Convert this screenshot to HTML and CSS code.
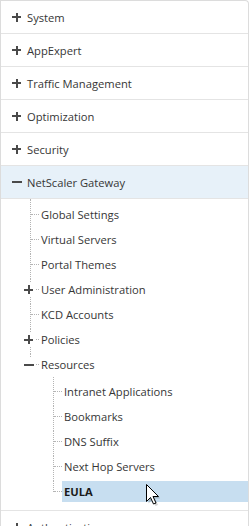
FILE: index.html
```html
<!DOCTYPE html>
<html>
<head>
<meta charset="utf-8">
<link rel="stylesheet" href="styles.css">
</head>
<body>
<div class="tree">
  <ul class="root">
    <li class="node"><div class="head"><span class="ico plus"></span><span>System</span></div></li>
    <li class="node"><div class="head"><span class="ico plus"></span><span>AppExpert</span></div></li>
    <li class="node"><div class="head"><span class="ico plus"></span><span>Traffic Management</span></div></li>
    <li class="node"><div class="head"><span class="ico plus"></span><span>Optimization</span></div></li>
    <li class="node"><div class="head"><span class="ico plus"></span><span>Security</span></div></li>
    <li class="node open">
      <div class="head active"><span class="ico minus"></span><span>NetScaler Gateway</span></div>
      <ul class="sub">
        <li class="item"><div class="lbl">Global Settings</div></li>
        <li class="item"><div class="lbl">Virtual Servers</div></li>
        <li class="item"><div class="lbl">Portal Themes</div></li>
        <li class="item has"><span class="ico plus sm"></span><div class="lbl">User Administration</div></li>
        <li class="item"><div class="lbl">KCD Accounts</div></li>
        <li class="item has"><span class="ico plus sm"></span><div class="lbl">Policies</div></li>
        <li class="item has last"><span class="ico minus sm"></span><div class="lbl">Resources</div>
          <ul class="sub2">
            <li class="item2"><div class="lbl">Intranet Applications</div></li>
            <li class="item2"><div class="lbl">Bookmarks</div></li>
            <li class="item2"><div class="lbl">DNS Suffix</div></li>
            <li class="item2"><div class="lbl">Next Hop Servers</div></li>
            <li class="item2 last"><div class="lbl sel">EULA</div></li>
          </ul>
        </li>
      </ul>
    </li>
    <li class="node"><div class="head"><span class="ico plus"></span><span>Authentication</span></div></li>
  </ul>
</div>
<svg class="cursor" width="14" height="22" viewBox="0 0 14 22">
  <path d="M1.5 1.5 L1.5 18.5 L5.5 14.5 L8.5 21 L11 20 L8 13.5 L13.5 13.5 Z" fill="#000" opacity="0.18" transform="translate(1 1)"/>
  <path d="M0.5 0.5 L0.5 17.5 L4.5 13.5 L7.5 20 L10 19 L7 12.5 L12.5 12.5 Z" fill="#fff" stroke="#000" stroke-width="1" stroke-linejoin="miter"/>
</svg>
</body>
</html>
```

FILE: styles.css
```css
html, body {
  margin: 0;
  padding: 0;
  background: #fff;
}
body {
  font-family: "Open Sans", "Liberation Sans", sans-serif;
  font-size: 11.2px;
  color: #363636;
}
.tree {
  width: 249px;
  box-sizing: border-box;
  border: 1px solid #dcdcdc;
  border-bottom: none;
  border-radius: 0 4px 0 0;
  overflow: hidden;
  height: 526px;
}
ul {
  list-style: none;
  margin: 0;
  padding: 0;
}
.head {
  height: 32px;
  display: flex;
  align-items: center;
  padding-left: 11px;
  border-bottom: 1px solid #e4e4e4;
}
.head.active {
  background: #e7f1f9;
}
.node.open {
  border-bottom: 1px solid #e4e4e4;
}
.ico {
  position: relative;
  width: 9px;
  height: 9px;
  margin-right: 6px;
  flex: none;
}
.ico::before, .ico::after {
  content: "";
  position: absolute;
  background: #4a4a4a;
}
.ico::before {
  left: 0;
  right: 0;
  top: 3.5px;
  height: 2px;
}
.plus::after {
  top: 0;
  bottom: 0;
  left: 3.5px;
  width: 2px;
}
.minus::before {
  left: 0;
  right: -1px;
}
.sub {
  padding: 5px 0 0;
}
.item, .item2 {
  position: relative;
  padding-bottom: 4px;
}
.item {
  padding-left: 38px;
}
.item::before, .item2::before {
  content: "";
  position: absolute;
  top: 0;
  bottom: 0;
  border-left: 1px dotted #b4b4b4;
}
.item::before { left: 29px; }
.item2::before { left: 12px; }
.item:first-child::before { top: -5px; }
.item2:first-child::before { top: -4px; }
.item.last::before, .item2.last::before {
  bottom: auto;
  height: 11px;
}
.item::after, .item2::after {
  content: "";
  position: absolute;
  top: 10px;
  width: 8px;
  border-top: 1px dotted #b4b4b4;
}
.item::after { left: 30px; }
.item2::after { left: 13px; }
.ico.sm {
  position: absolute;
  left: 23px;
  top: 6px;
  z-index: 1;
  background: #fff;
  box-shadow: 0 0 0 3px #fff;
  margin: 0;
}
.lbl {
  height: 21px;
  line-height: 21px;
  padding: 0 2px;
  white-space: nowrap;
}
.sub2 {
  padding-top: 6px;
  margin-left: -38px;
}
.item2 {
  padding-left: 61px;
}
.item2::before { left: 52px; }
.item2::after { left: 53px; }
.lbl.sel {
  background: #c7def0;
  font-weight: bold;
  color: #1a1a1a;
}
.cursor {
  position: absolute;
  left: 146px;
  top: 484px;
}
```
